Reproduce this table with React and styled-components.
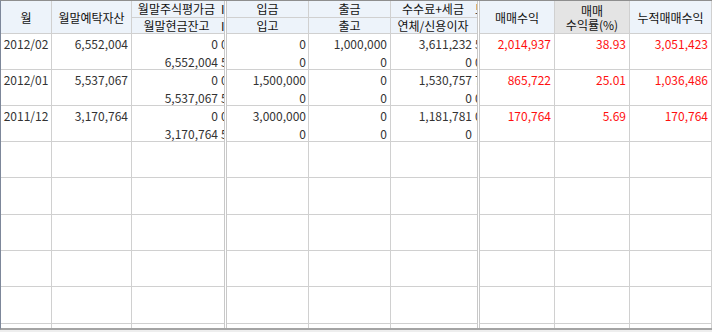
import React from "react";
import styled, { createGlobalStyle } from "styled-components";

const Global = createGlobalStyle`
  html, body { margin: 0; padding: 0; background: #ffffff; }
  body { font-family: "Noto Sans CJK KR", "Noto Sans", sans-serif; }
`;

const LINE = "#d0d0d0";

const Frame = styled.div`
  width: 712px;
  height: 332px;
  background: #eeeeee;
  overflow: hidden;
`;

const Table = styled.div`
  box-sizing: border-box;
  width: 712px;
  height: 330px;
  background: #ffffff;
  border-top: 1px solid #8e8e8e;
  border-left: 1px solid #7d879a;
  border-bottom: 2px solid #a4a4a4;
  display: grid;
  grid-template-columns: 51px 80px 89px 3px 3px 82px 82px 84px 2px 3px 75px 75px 82px;
  grid-template-rows: 17px 16px 36px 36px 36px 36px 37px 36px 36px 37px 36px;
  overflow: hidden;
  font-size: 12px;
`;

const HeadCell = styled.div`
  box-sizing: border-box;
  grid-row: ${(p) => (p.$span ? "span 2" : "auto")};
  background: ${(p) => (p.$sorted ? "#e4e4e4" : "#edf3fa")};
  border-right: ${(p) => (p.$noRight ? "none" : `1px solid ${LINE}`)};
  border-bottom: 1px solid ${LINE};
  color: #111111;
  display: flex;
  align-items: center;
  justify-content: ${(p) => (p.$clip ? "flex-start" : "center")};
  text-align: center;
  line-height: 14px;
  padding-top: ${(p) => (p.$span ? "1px" : "0")};
  white-space: nowrap;
  overflow: hidden;
`;

const Splitter = styled.div`
  grid-row: 1 / -1;
  grid-column: ${(p) => p.$col};
  box-sizing: border-box;
  border-left: 1px solid #c8c8c8;
  border-right: 1px solid #c8c8c8;
  background: #ffffff;
`;

const Cell = styled.div`
  box-sizing: border-box;
  border-right: ${(p) => (p.$noRight ? "none" : `1px solid ${LINE}`)};
  border-bottom: 1px solid ${LINE};
  display: grid;
  grid-template-rows: 18px 17px;
  align-items: center;
  padding-right: ${(p) => (p.$clip || p.$center ? 0 : p.$pr ?? 3)}px;
  text-align: ${(p) => (p.$clip ? "left" : p.$center ? "center" : "right")};
  color: ${(p) => (p.$red ? "#ff1010" : "#333333")};
  white-space: nowrap;
  overflow: hidden;
`;

const Line = styled.span`
  display: block;
  line-height: 17px;
  padding-top: 1px;
`;

const rows = [
  {
    date: "2012/02", asset: "6,552,004", stock: "0", cash: "6,552,004", clipA: ["0", "5"],
    in1: "0", in2: "0", out1: "1,000,000", out2: "0", fee: "3,611,232", intr: "0",
    clipB: ["5", "0"], profit: "2,014,937", rate: "38.93", cum: "3,051,423",
  },
  {
    date: "2012/01", asset: "5,537,067", stock: "0", cash: "5,537,067", clipA: ["0", "5"],
    in1: "1,500,000", in2: "0", out1: "0", out2: "0", fee: "1,530,757", intr: "0",
    clipB: ["7", "0"], profit: "865,722", rate: "25.01", cum: "1,036,486",
  },
  {
    date: "2011/12", asset: "3,170,764", stock: "0", cash: "3,170,764", clipA: ["0", "5"],
    in1: "3,000,000", in2: "0", out1: "0", out2: "0", fee: "1,181,781", intr: "0",
    clipB: ["0", ""], profit: "170,764", rate: "5.69", cum: "170,764",
  },
];

const EMPTY = {
  date: "", asset: "", stock: "", cash: "", clipA: ["", ""], in1: "", in2: "",
  out1: "", out2: "", fee: "", intr: "", clipB: ["", ""], profit: "", rate: "", cum: "",
};

function Two({ a, b, ...rest }) {
  return (
    <Cell {...rest}>
      <Line>{a}</Line>
      <Line>{b}</Line>
    </Cell>
  );
}

function BodyRow({ r }) {
  return (
    <>
      <Two a={r.date} b="" $center />
      <Two a={r.asset} b="" />
      <Two a={r.stock} b={r.cash} $noRight $pr={3} />
      <Two a={r.clipA[0]} b={r.clipA[1]} $clip $noRight />
      <Two a={r.in1} b={r.in2} $pr={2} />
      <Two a={r.out1} b={r.out2} />
      <Two a={r.fee} b={r.intr} $noRight $pr={3} />
      <Two a={r.clipB[0]} b={r.clipB[1]} $clip $noRight />
      <Two a={r.profit} b="" $red />
      <Two a={r.rate} b="" $red />
      <Two a={r.cum} b="" $red />
    </>
  );
}

export default function App() {
  const body = [...rows, ...Array.from({ length: 6 }, () => EMPTY)];
  return (
    <>
      <Global />
      <Frame>
        <Table>
          <Splitter $col={5} />
          <Splitter $col={10} />
          <HeadCell $span>월</HeadCell>
          <HeadCell $span>월말예탁자산</HeadCell>
          <HeadCell $noRight>월말주식평가금</HeadCell>
          <HeadCell $noRight $clip>I</HeadCell>
          <HeadCell>입금</HeadCell>
          <HeadCell>출금</HeadCell>
          <HeadCell $noRight>수수료+세금</HeadCell>
          <HeadCell $noRight $clip>보</HeadCell>
          <HeadCell $span>매매수익</HeadCell>
          <HeadCell $span $sorted>
            매매
            <br />
            수익률(%)
          </HeadCell>
          <HeadCell $span>누적매매수익</HeadCell>
          <HeadCell $noRight>월말현금잔고</HeadCell>
          <HeadCell $noRight $clip>I</HeadCell>
          <HeadCell>입고</HeadCell>
          <HeadCell>출고</HeadCell>
          <HeadCell $noRight>연체/신용이자</HeadCell>
          <HeadCell $noRight $clip></HeadCell>
          {body.map((r, i) => (
            <BodyRow key={i} r={r} />
          ))}
        </Table>
      </Frame>
    </>
  );
}
